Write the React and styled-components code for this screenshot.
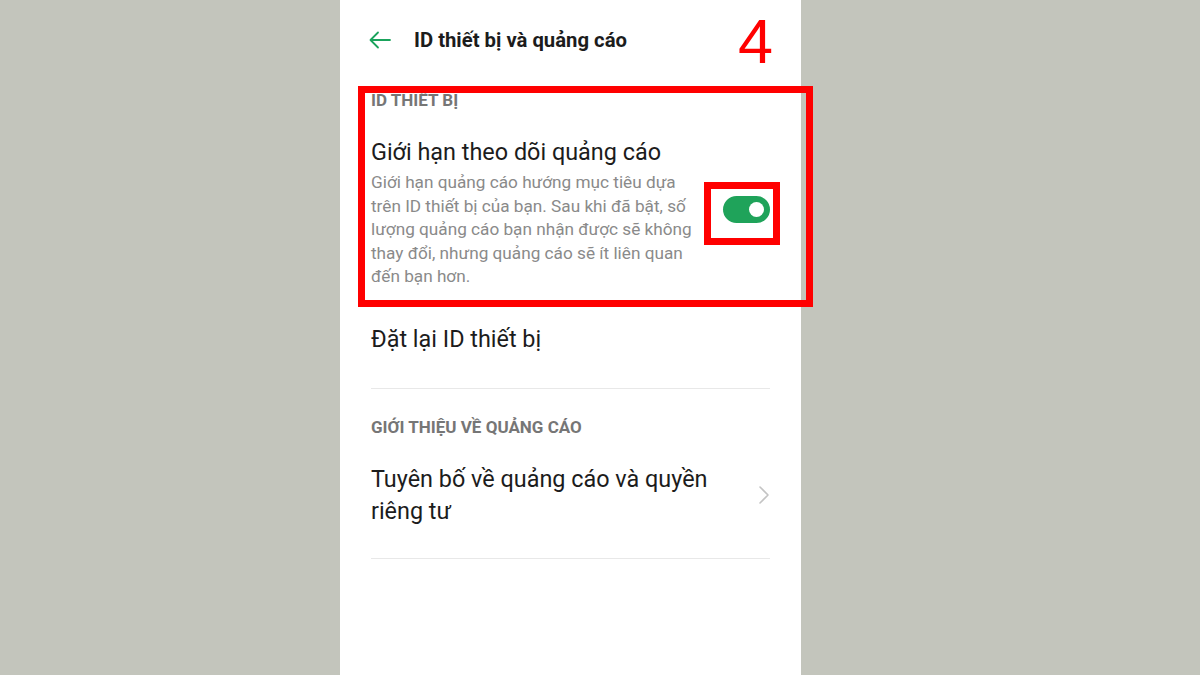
import React, { useState } from 'react'
import styled, { createGlobalStyle } from 'styled-components'

const Global = createGlobalStyle`
  html, body { margin: 0; padding: 0; }
  body {
    background: #c3c5bc;
    font-family: Roboto, "Noto Sans", "Liberation Sans", sans-serif;
  }
`

const Page = styled.div`
  width: 1200px;
  height: 675px;
  display: flex;
  padding-left: 340px;
  box-sizing: border-box;
  overflow: hidden;
`

const Phone = styled.div`
  position: relative;
  width: 461px;
  height: 675px;
  background: #fff;
  display: flex;
  flex-direction: column;
`

const Header = styled.div`
  height: 80px;
  display: flex;
  align-items: center;
  padding-left: 28px;
  position: relative;
`

const BackBtn = styled.button`
  border: 0;
  background: none;
  padding: 0;
  width: 24px;
  height: 24px;
  display: flex;
  align-items: center;
  justify-content: center;
  cursor: pointer;
  margin-right: 22px;
`

const Title = styled.h1`
  margin: 0;
  font-size: 20.3px;
  font-weight: 700;
  color: #1c1c1c;
`

const StepNumber = styled.span`
  position: absolute;
  right: 28px;
  top: 10px;
  font-family: "Liberation Sans", Arial, sans-serif;
  font-size: 63px;
  line-height: 1;
  color: #ff0000;
`

const Body = styled.div`
  padding: 0 31px;
  display: flex;
  flex-direction: column;
`

const SectionLabel = styled.div`
  margin-top: ${p => p.$top}px;
  line-height: 20px;
  font-size: 17px;
  font-weight: 700;
  color: #767676;
`

const ToggleRow = styled.div`
  display: flex;
  align-items: center;
  justify-content: space-between;
  padding-top: 27px;
`

const ToggleText = styled.div`
  width: 332px;
`

const ItemTitle = styled.div`
  font-size: 23.4px;
  line-height: ${p => p.$lh || 30}px;
  color: #1c1c1c;
`

const Description = styled.p`
  margin: 4px 0 0;
  font-size: 17.2px;
  line-height: 23.5px;
  color: #8a8a8a;
`

const Track = styled.button`
  position: relative;
  width: 47px;
  height: 27px;
  border: 0;
  padding: 0;
  border-radius: 14px;
  background: ${p => (p.$on ? '#1fa35a' : '#c8c8c8')};
  cursor: pointer;
  margin-top: -6px;
`

const Knob = styled.span`
  position: absolute;
  top: 6px;
  left: ${p => (p.$on ? 26 : 6)}px;
  width: 15px;
  height: 15px;
  border-radius: 50%;
  background: #fff;
`

const ItemRow = styled.div`
  display: flex;
  align-items: center;
  justify-content: space-between;
  padding: ${p => p.$pt}px 0 ${p => p.$pb}px;
  border-bottom: 1px solid #e8e8e8;
`

const Frame = styled.div`
  position: absolute;
  border: ${p => p.$w}px solid #ff0000;
  left: ${p => p.$x}px;
  top: ${p => p.$y}px;
  width: ${p => p.$width}px;
  height: ${p => p.$height}px;
  box-sizing: border-box;
  pointer-events: none;
`

function Arrow() {
  return (
    <svg width="22" height="18" viewBox="0 0 22 18" fill="none">
      <path d="M21 9H2M9 1.5L1.5 9 9 16.5" stroke="#1aa35c" strokeWidth="1.8" strokeLinecap="round" strokeLinejoin="round" />
    </svg>
  )
}

function Chevron() {
  return (
    <svg width="12" height="20" viewBox="0 0 12 20" fill="none">
      <path d="M2 2l8 8-8 8" stroke="#c4c4c4" strokeWidth="1.6" strokeLinecap="round" strokeLinejoin="round" />
    </svg>
  )
}

export default function App() {
  const [on, setOn] = useState(true)
  return (
    <>
      <Global />
      <Page>
        <Phone>
          <Header>
            <BackBtn><Arrow /></BackBtn>
            <Title>ID thiết bị và quảng cáo</Title>
            <StepNumber>4</StepNumber>
          </Header>
          <Body>
            <SectionLabel $top={10}>ID THIẾT BỊ</SectionLabel>
            <ToggleRow>
              <ToggleText>
                <ItemTitle>Giới hạn theo dõi quảng cáo</ItemTitle>
                <Description>
                  Giới hạn quảng cáo hướng mục tiêu dựa trên ID thiết bị của bạn. Sau khi đã bật, số lượng quảng cáo bạn nhận được sẽ không thay đổi, nhưng quảng cáo sẽ ít liên quan đến bạn hơn.
                </Description>
              </ToggleText>
              <Track $on={on} onClick={() => setOn(!on)}>
                <Knob $on={on} />
              </Track>
            </ToggleRow>
            <ItemRow $pt={35} $pb={34}>
              <ItemTitle>Đặt lại ID thiết bị</ItemTitle>
            </ItemRow>
            <SectionLabel $top={28}>GIỚI THIỆU VỀ QUẢNG CÁO</SectionLabel>
            <ItemRow $pt={26} $pb={31}>
              <ItemTitle $lh={32}>Tuyên bố về quảng cáo và quyền<br />riêng tư</ItemTitle>
              <Chevron />
            </ItemRow>
          </Body>
          <Frame $w={7} $x={18} $y={86} $width={455} $height={221} />
          <Frame $w={7} $x={364} $y={182} $width={76} $height={63} />
        </Phone>
      </Page>
    </>
  )
}
